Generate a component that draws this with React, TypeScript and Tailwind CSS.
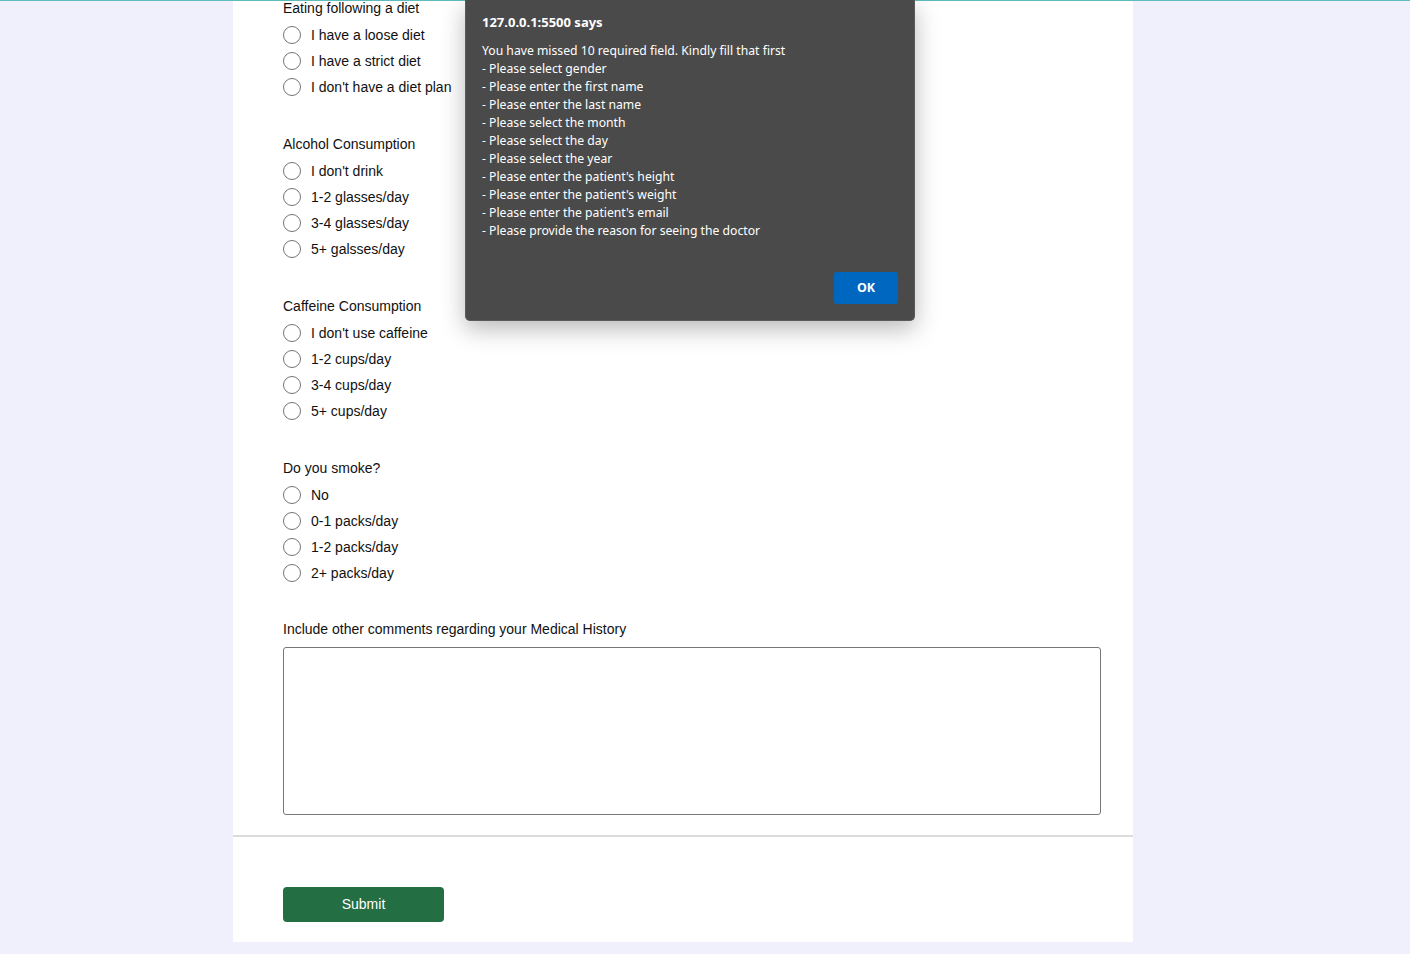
import React from "react";

const sections = [
  { title: "Eating following a diet", items: ["I have a loose diet", "I have a strict diet", "I don't have a diet plan"] },
  { title: "Alcohol Consumption", items: ["I don't drink", "1-2 glasses/day", "3-4 glasses/day", "5+ galsses/day"] },
  { title: "Caffeine Consumption", items: ["I don't use caffeine", "1-2 cups/day", "3-4 cups/day", "5+ cups/day"] },
  { title: "Do you smoke?", items: ["No", "0-1 packs/day", "1-2 packs/day", "2+ packs/day"] },
];

const lines = [
  "- Please select gender",
  "- Please enter the first name",
  "- Please enter the last name",
  "- Please select the month",
  "- Please select the day",
  "- Please select the year",
  "- Please enter the patient's height",
  "- Please enter the patient's weight",
  "- Please enter the patient's email",
  "- Please provide the reason for seeing the doctor",
];

export default function App() {
  return (
    <div className="relative h-[954px] w-[1410px] overflow-hidden bg-[#f0f0fc] text-[14px] text-[#111]" style={{ fontFamily: "'Liberation Sans', Arial, sans-serif" }}>
      <div className="absolute left-0 right-0 top-0 h-px bg-[#5ebcbc]" />
      <div className="ml-[233px] flex w-[900px] flex-col bg-white">
        <div className="flex flex-col pl-[50px] pr-[32px]">
          {sections.map((s, i) => (
            <div key={i} className={i === 0 ? "" : "mt-[36px]"}>
              <div className="h-[16px] leading-[16px]">{s.title}</div>
              <div className="mt-[6px] flex flex-col">
                {s.items.map((it) => (
                  <div key={it} className="flex h-[26px] items-center">
                    <span className="box-border h-[18px] w-[18px] rounded-full border border-[#767676] bg-white" />
                    <span className="ml-[10px] leading-[16px]">{it}</span>
                  </div>
                ))}
              </div>
            </div>
          ))}
          <div className="mt-[35px] h-[16px] leading-[16px]">Include other comments regarding your Medical History</div>
          <textarea className="mt-[10px] box-border h-[168px] w-[818px] resize-none rounded-[3px] border border-[#767676] bg-white outline-none" />
        </div>
        <div className="mt-[20px] h-[2px] bg-[#dcdcdc]" />
        <div className="pb-[20px] pl-[50px] pt-[50px]">
          <button className="h-[35px] w-[161px] rounded-[4px] bg-[#236e42] text-[14px] text-white">Submit</button>
        </div>
      </div>

      <div
        className="absolute left-[465px] top-0 box-border h-[321px] w-[450px] rounded-b-[5px] border border-t-0 border-[#5a5a5a] bg-[#4a4a4a] text-white shadow-[0_8px_24px_rgba(0,0,0,0.28)]"
        style={{ fontFamily: "'Noto Sans', 'Open Sans', sans-serif" }}
      >
        <div className="pl-[16px] pt-[13px] text-[13px] font-bold leading-[18px]">127.0.0.1:5500 says</div>
        <div className="mt-[11px] pl-[16px] text-[12.2px] leading-[18px]">
          <div>You have missed 10 required field. Kindly fill that first</div>
          {lines.map((l) => (
            <div key={l}>{l}</div>
          ))}
        </div>
        <button className="absolute left-[368px] top-[272px] h-[32px] w-[64px] rounded-[3px] bg-[#0067c0] pt-px text-[12.5px] font-bold text-white">OK</button>
      </div>
    </div>
  );
}
